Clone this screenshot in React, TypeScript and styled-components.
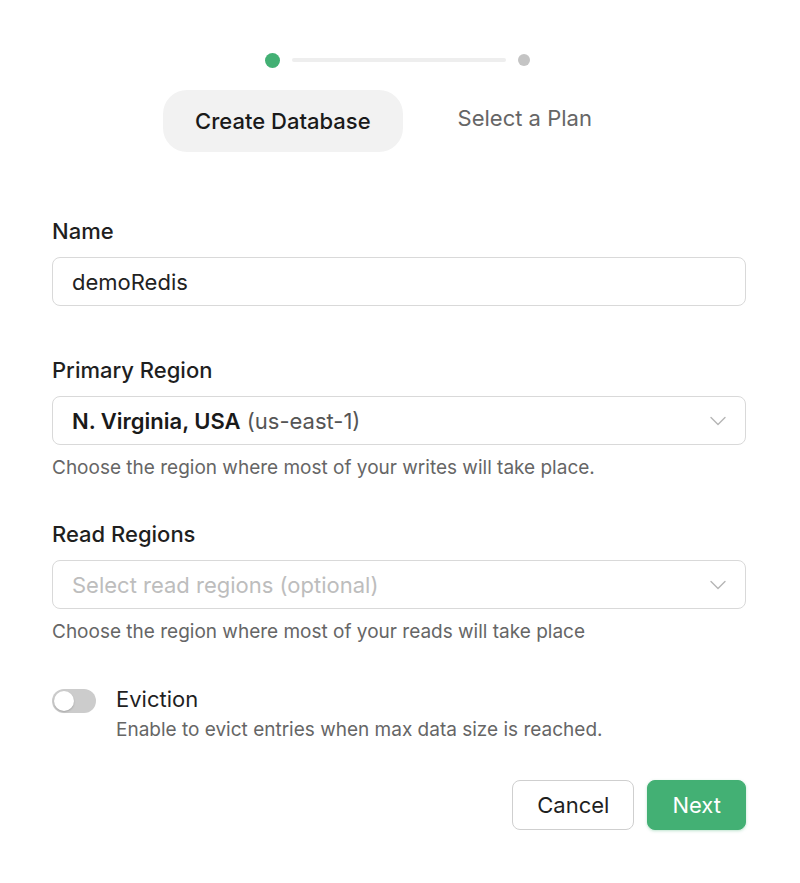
import React from "react";
import styled, { createGlobalStyle } from "styled-components";

const Global = createGlobalStyle`
  html, body { margin: 0; padding: 0; background: #fff; }
  body { font-family: Inter, "Noto Sans", sans-serif; color: #1f1f1f; -webkit-font-smoothing: antialiased; }
  * { box-sizing: border-box; }
`;

const Page = styled.div`
  width: 800px;
  padding: 52px 54px 40px 52px;
  display: flex;
  flex-direction: column;
`;

const Stepper = styled.div`
  display: flex;
  flex-direction: column;
  align-items: center;
`;

const Track = styled.div`
  display: flex;
  align-items: center;
  gap: 12px;
  height: 16px;
  margin-right: 4px;
`;

const Dot = styled.span<{ $active?: boolean }>`
  width: ${(p) => (p.$active ? 15 : 12)}px;
  height: ${(p) => (p.$active ? 15 : 12)}px;
  border-radius: 50%;
  background: ${(p) => (p.$active ? "#43b074" : "#c4c4c4")};
`;

const Line = styled.span`
  width: 214px;
  height: 4px;
  border-radius: 2px;
  background: #eeeeee;
`;

const Tabs = styled.div`
  display: flex;
  align-items: center;
  gap: 23px;
  margin-top: 22px;
  margin-right: 11px;
`;

const Tab = styled.div<{ $active?: boolean }>`
  height: 62px;
  padding: 0 32px;
  border-radius: 24px;
  display: flex;
  align-items: center;
  font-size: 22px;
  font-weight: ${(p) => (p.$active ? 500 : 400)};
  color: ${(p) => (p.$active ? "#1a1a1a" : "#666")};
  background: ${(p) => (p.$active ? "#f2f2f2" : "transparent")};
  margin-top: ${(p) => (p.$active ? 0 : -6)}px;
`;

const Field = styled.div<{ $mt: number }>`
  display: flex;
  flex-direction: column;
  margin-top: ${(p) => p.$mt}px;
`;

const Label = styled.label`
  font-size: 22px;
  font-weight: 500;
  color: #1f1f1f;
  line-height: 24px;
`;

const Box = styled.div`
  margin-top: 14px;
  height: 49px;
  border: 1px solid #d9d9d9;
  border-radius: 8px;
  display: flex;
  align-items: center;
  justify-content: space-between;
  padding: 0 19px 0 19px;
  font-size: 22px;
  color: #222;
`;

const Strong = styled.span`
  font-weight: 600;
  color: #1a1a1a;
`;

const Muted = styled.span`
  color: #555;
`;

const Placeholder = styled.span`
  color: #bdbdbd;
`;

const Help = styled.div<{ $mt?: number }>`
  margin-top: ${(p) => (p.$mt ?? 12)}px;
  font-size: 19px;
  color: #666;
  line-height: 22px;
`;

const ToggleRow = styled.div`
  display: flex;
  gap: 20px;
  margin-top: 44px;
`;

const Switch = styled.span`
  width: 44px;
  height: 24px;
  border-radius: 12px;
  background: #cccccc;
  padding: 2px;
  display: flex;
  margin-top: 2px;
  flex-shrink: 0;
`;

const Knob = styled.span`
  width: 20px;
  height: 20px;
  border-radius: 50%;
  background: #fff;
  box-shadow: 0 1px 2px rgba(0, 0, 0, 0.2);
`;

const ToggleText = styled.div`
  display: flex;
  flex-direction: column;
  gap: 8px;
`;

const ToggleTitle = styled.div`
  font-size: 22px;
  color: #1f1f1f;
  line-height: 24px;
`;

const Actions = styled.div`
  display: flex;
  justify-content: flex-end;
  gap: 13px;
  margin-top: 39px;
`;

const Button = styled.button<{ $primary?: boolean }>`
  height: 50px;
  padding: 0 24px;
  border-radius: 8px;
  font-family: inherit;
  font-size: 22px;
  border: 1px solid ${(p) => (p.$primary ? "#43b074" : "#cfcfcf")};
  background: ${(p) => (p.$primary ? "#43b074" : "#fff")};
  color: ${(p) => (p.$primary ? "#fff" : "#1f1f1f")};
  box-shadow: ${(p) => (p.$primary ? "0 1px 3px rgba(67,176,116,0.35)" : "none")};
`;

const Chevron = () => (
  <svg width="16" height="10" viewBox="0 0 16 10" fill="none">
    <path d="M1 1.5L8 8.5L15 1.5" stroke="#b5b5b5" strokeWidth="1.4" strokeLinecap="round" strokeLinejoin="round" />
  </svg>
);

export default function App() {
  return (
    <Page>
      <Global />
      <Stepper>
        <Track>
          <Dot $active />
          <Line />
          <Dot />
        </Track>
        <Tabs>
          <Tab $active>Create Database</Tab>
          <Tab>Select a Plan</Tab>
        </Tabs>
      </Stepper>

      <Field $mt={67}>
        <Label>Name</Label>
        <Box>demoRedis</Box>
      </Field>

      <Field $mt={52}>
        <Label>Primary Region</Label>
        <Box>
          <span>
            <Strong>N. Virginia, USA</Strong> <Muted>(us-east-1)</Muted>
          </span>
          <Chevron />
        </Box>
        <Help>Choose the region where most of your writes will take place.</Help>
      </Field>

      <Field $mt={43}>
        <Label>Read Regions</Label>
        <Box>
          <Placeholder>Select read regions (optional)</Placeholder>
          <Chevron />
        </Box>
        <Help>Choose the region where most of your reads will take place</Help>
      </Field>

      <ToggleRow>
        <Switch>
          <Knob />
        </Switch>
        <ToggleText>
          <ToggleTitle>Eviction</ToggleTitle>
          <Help $mt={0}>Enable to evict entries when max data size is reached.</Help>
        </ToggleText>
      </ToggleRow>

      <Actions>
        <Button>Cancel</Button>
        <Button $primary>Next</Button>
      </Actions>
    </Page>
  );
}
